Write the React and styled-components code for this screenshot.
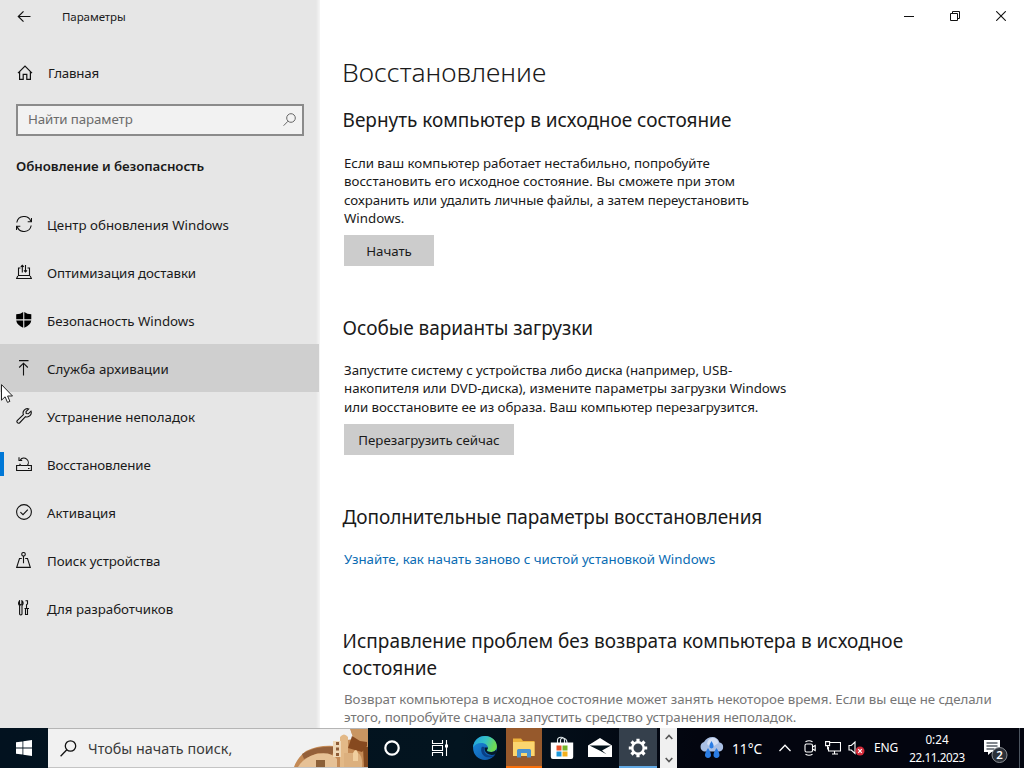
import React from 'react'
import styled, { createGlobalStyle } from 'styled-components'

const GlobalStyle = createGlobalStyle`
  * { box-sizing: border-box; }
  body {
    margin: 0;
    overflow: hidden;
    background: #fff;
    font-family: "Noto Sans", "Open Sans", sans-serif;
    color: #1a1a1a;
  }
  svg { display: block; flex: none; }
`;

const Screen = styled.div`
  position: relative;
  width: 1024px;
  height: 768px;
  display: flex;
  flex-direction: column;
  overflow: hidden;
`;

const Window = styled.div`
  height: 728px;
  display: flex;
  overflow: hidden;
`;

/* ---------- sidebar ---------- */

const Sidebar = styled.aside`
  width: 320px;
  flex: none;
  background: linear-gradient(90deg, #e6e6e6 316px, #f6f6f6 320px);
`;

const TitleRow = styled.div`
  height: 32px;
  padding: 1px 0 0 17px;
  display: flex;
  align-items: center;
  gap: 31px;
  font-size: 11.5px;
  letter-spacing: -0.08px;
`;

const HomeLink = styled.div`
  height: 48px;
  margin-top: 16px;
  padding: 2px 0 0 17px;
  display: flex;
  align-items: center;
  gap: 15px;
  font-size: 13.3px;
  letter-spacing: -0.2px;
`;

const SearchField = styled.div`
  width: 288px;
  height: 32px;
  margin: 8px 0 0 16px;
  padding: 0 6px 2px 10px;
  display: flex;
  align-items: center;
  justify-content: space-between;
  border: 2px solid #8b8b8b;
  background: #f2f2f2;
  font-size: 13.3px;
  letter-spacing: -0.1px;
  color: #6b6b6b;

  svg { margin-top: 2px; }
`;

const GroupTitle = styled.div`
  height: 64px;
  padding-left: 16px;
  line-height: 60px;
  font-size: 13.3px;
  font-weight: 600;
  letter-spacing: -0.08px;
`;

const NavItem = styled.div`
  width: ${p => p.$hover ? '319px' : '316px'};
  height: 48px;
  display: flex;
  align-items: center;
  background: ${p => p.$hover ? '#cfcfcf' : 'transparent'};
  font-size: 13.3px;
  letter-spacing: ${p => p.$track || 0}px;
`;

const Marker = styled.span`
  width: 4px;
  height: 24px;
  margin-right: 12px;
  background: ${p => p.$active ? '#0078d7' : 'transparent'};
`;

const NavLabel = styled.span`
  padding: 2px 0 0 15px;
`;

/* ---------- main pane ---------- */

const Main = styled.main`
  flex: 1;
  background: #fff;
`;

const Controls = styled.div`
  height: 32px;
  display: flex;
  justify-content: flex-end;
`;

const Control = styled.div`
  width: 46px;
  height: 32px;
  display: flex;
  align-items: center;
  justify-content: center;
`;

const Body = styled.div`
  padding: 22px 0 0 22px;
`;

const Heading = styled.h1`
  margin: 0;
  font-size: 26.5px;
  font-weight: 300;
  line-height: 36px;
`;

const Section = styled.section`
  height: ${p => p.$height}px;
  padding-top: 17px;
`;

const Subheading = styled.h2`
  margin: 0 0 ${p => p.$gap}px;
  padding-left: 0.6px;
  font-size: 19px;
  font-weight: 400;
  line-height: 27px;
`;

const Line = styled.span`
  display: block;
  white-space: nowrap;
  letter-spacing: ${p => p.$track || 0}px;
`;

const Text = styled.div`
  padding-left: 2px;
  font-size: 13.3px;
  line-height: 18.4px;
  color: ${p => p.$muted ? '#767676' : '#1a1a1a'};
`;

const Link = styled.a`
  display: block;
  padding-left: 2px;
  font-size: 13.3px;
  line-height: 18.4px;
  color: #0a6cb3;
`;

const Button = styled.button`
  display: block;
  width: ${p => p.$width}px;
  height: 31px;
  margin: 7.5px 0 0 2px;
  padding: 1px 0 0;
  border: 0;
  background: #ccc;
  font: 13.3px "Noto Sans", sans-serif;
  letter-spacing: -0.04px;
  color: #1a1a1a;
`;

/* ---------- taskbar ---------- */

const Taskbar = styled.footer`
  height: 40px;
  display: flex;
  background: linear-gradient(90deg, #02121f, #03141f 45%, #03050f 68%);
  color: #fff;
`;

const Slot = styled.div`
  width: ${p => p.$width}px;
  height: 40px;
  flex: none;
  display: flex;
  align-items: center;
  justify-content: center;
  background: ${p => p.$bg || 'transparent'};
  border-bottom: ${p => p.$line ? `2px solid ${p.$line}` : '0'};
  border-top: ${p => p.$line ? '2px solid transparent' : '0'};
`;

const TaskSearch = styled.div`
  width: 320px;
  height: 40px;
  flex: none;
  display: flex;
  align-items: center;
  border-top: 1px solid #b5b5b5;
  border-bottom: 1px solid #c4c4c4;
  background: #f1f1f1;
  color: #3a3a3a;
  padding-left: 12px;
  font-size: 14.3px;
  letter-spacing: 0.05px;
`;

const TaskLabel = styled.span`
  flex: 1;
  padding: 1px 0 0 11px;
`;

const ScrollArrows = styled.div`
  width: 17px;
  height: 40px;
  margin-left: 3px;
  flex: none;
  display: flex;
  flex-direction: column;
  align-items: center;
  justify-content: space-between;
  padding: 6px 0 5px;
  background: #f0f0f0;
`;

const Degrees = styled.span`
  width: 40px;
  padding-left: 7px;
  font-size: 13.7px;
  line-height: 41px;
`;

const Language = styled.span`
  width: 39px;
  padding-left: 7px;
  font-size: 12px;
  line-height: 40px;
  letter-spacing: -0.2px;
`;

const Clock = styled.div`
  width: 62px;
  padding-top: 2px;
  font-size: 11.7px;
  line-height: 18px;
  text-align: center;
  white-space: nowrap;
`;

const ActionCenter = styled.div`
  width: 51px;
  padding: 10px 0 0 15px;
`;

const Pointer = styled.div`
  position: absolute;
  left: 1px;
  top: 384px;
`;

const Stroke = ({ w = 16, h = 16, sw = 1.1, children, color = '#111' }) => (
  <svg width={w} height={h} viewBox={`0 0 ${w} ${h}`} fill="none" stroke={color} strokeWidth={sw}>
    {children}
  </svg>
)

const icons = {
  update: (
    <Stroke>
      <path d="M.8 6.5A7.300 7.300 0 0 1 14.900 5.500M15.200 9.500A7.300 7.300 0 0 1 1.100 10.500" />
      <path d="M15.500 2v3.800h-3.800M.5 14v-3.800h3.800" />
    </Stroke>
  ),
  delivery: (
    <Stroke>
      <path d="M4.500 4H2.500v7.500h11V4h-2M1.800 12L.6 14.500h14.800L14.200 12" />
      <path d="M6.300 8.500V1.300M4.800 2.900l1.500-1.600 1.500 1.600M9.500 1v7M8 6.400L9.500 8 11 6.400" />
    </Stroke>
  ),
  shield: (
    <svg width="16" height="16" viewBox="0 0 16 16" fill="#000">
      <path d="M7.200 0v7.300H.2V2.200Q4.600 2.200 7.200 0zM8.300 0Q11 2.200 15.300 2.200V7.300h-7zM.2 8.400h7v7.300Q.8 12.800.2 8.400zM8.300 8.400h7q-.6 4.400-7 7.300z" />
    </svg>
  ),
  backup: (
    <Stroke>
      <path d="M3 .6h9.500M7.500 15.500V3.200M3.200 7.500l4.300-4.300 4.300 4.300" />
    </Stroke>
  ),
  wrench: (
    <Stroke>
      <path d="M15 3.200L12.300 5.800 10.200 5.600 10 3.600 12.700.9A4.300 4.300 0 0 0 7.400 6.600L1.200 12.600A1.700 1.700 0 0 0 3.500 15L9.500 8.700A4.300 4.300 0 0 0 15 3.200z" />
    </Stroke>
  ),
  recovery: (
    <Stroke>
      <path d="M4.500 9.500H.6v5h14.800v-5H11.500M12 12.500h1.500" />
      <path d="M4.300 3.800A4.300 4.300 0 1 1 11.300 9.500H5L3.500 7.800M3 1.300v3.200h3.200" />
    </Stroke>
  ),
  activation: (
    <Stroke>
      <circle cx="8" cy="8" r="7.400" />
      <path d="M4.400 8.200l2.600 2.500 4.800-5" />
    </Stroke>
  ),
  find: (
    <Stroke>
      <circle cx="7.500" cy="2.300" r="1.800" />
      <path d="M7.500 4.100v7.200M5.800 6.500H3.500L.7 15.400h13.600L11.500 6.500H9.200" />
    </Stroke>
  ),
  developers: (
    <Stroke>
      <path d="M3.500.8v3l1.200 1.100L5.900 3.800v-3Q7.500 2 7 4L6 5.600v8.600q-1.200 1.500-2.400 0V5.600Q1.500 3.500 3.500.8z" />
      <path d="M9.500.8h2v3l-1 1v4M8.500 8.500h4.500M9.500 8.500v6h2v-6" />
    </Stroke>
  ),
}

const nav = [
  { id: 'update', label: 'Центр обновления Windows' },
  { id: 'delivery', label: 'Оптимизация доставки', track: -0.12 },
  { id: 'shield', label: 'Безопасность Windows', track: -0.03 },
  { id: 'backup', label: 'Служба архивации', hover: true },
  { id: 'wrench', label: 'Устранение неполадок' },
  { id: 'recovery', label: 'Восстановление', track: -0.14, active: true },
  { id: 'activation', label: 'Активация' },
  { id: 'find', label: 'Поиск устройства', track: -0.03 },
  { id: 'developers', label: 'Для разработчиков', track: -0.03 },
]

const SearchArt = () => (
  <svg width="74" height="38" viewBox="0 0 74 38">
    <path d="M0 38Q3 29 12 22Q24 16 40 17L46 12 60 10 56 0h18v38z" fill="#c48a55" />
    <path d="M57 0h17v18l-8-2q-9-7-9-16z" fill="#c99662" />
    <path d="M58 7l-4 12 14 4 5-6v-4l-7-1z" fill="#86491f" />
    <path d="M8 25Q22 16 42 18l-4 8-14-2-14 6z" fill="#94603a" />
    <path d="M4 38Q9 29 22 25Q37 22 43 30v8z" fill="#e6c196" />
    <path d="M22 38v-7h9v7z" fill="#8c6038" />
    <path d="M46 38V8q4-5 8 0v30z" fill="#e3b987" />
    <path d="M39 28V12h8v16z" fill="#efd8b7" />
    <path d="M42 13h3v3h-3zM42 18.500h3v3h-3zM42 24h3v3h-3z" fill="#8f5c36" />
    <path d="M50 24h14q5 3 4 14H50z" fill="#dcb07e" />
    <path d="M59 24q3-6 5 0v8h-5z" fill="#f0cf9f" />
    <path d="M69 18h5v20h-4z" fill="#82491f" />
  </svg>
)

const Edge = () => (
  <svg width="26" height="26" viewBox="0 0 24 24">
    <defs>
      <linearGradient id="edgeTop" x1="0" x2="1" y1="0" y2=".3">
        <stop offset="0" stopColor="#1f9fe0" />
        <stop offset=".55" stopColor="#35c2c6" />
        <stop offset="1" stopColor="#6fdb52" />
      </linearGradient>
      <linearGradient id="edgeLow" x1="0" x2="1" y1="0" y2="1">
        <stop offset="0" stopColor="#1b8fe0" />
        <stop offset="1" stopColor="#0d4fa0" />
      </linearGradient>
    </defs>
    <circle cx="12" cy="12" r="11" fill="url(#edgeLow)" />
    <path d="M1 11.500C1.500 5 6.300 1 12 1c6.500 0 11 4.700 11 9.600 0 3-2.300 5.100-5.400 5.100-2.600 0-3.900-.9-3.900-1.600 0-.5 1-.9 1-2.500 0-2.200-2.500-4.300-6-4.300-3.800 0-6.500 1.800-7.700 4.200z" fill="url(#edgeTop)" />
    <path d="M9 11c-1.800 4 1 9.300 5.700 9.600 3 .2 5-.8 6.700-2.200-1.500.6-3 .9-4.400.8-4-.2-6.600-3.500-5.500-7.200q.2-1.300-2.500-1z" fill="#0a3f86" />
    <path d="M14.700 11.600c0 1.600-1 2-1 2.500 0 .7 1.300 1.600 3.900 1.600 1.900 0 3.500-.8 4.500-2.100l.9 1.900-1.200 2.300q-4.300 1.500-7.300-.4-3.300-2-2.800-5.800z" fill="#051a2d" />
  </svg>
)

const Explorer = () => (
  <svg width="24" height="22" viewBox="0 0 24 22">
    <path d="M1 1.500h8l2 2.500h11.500v15H1z" fill="#eeb43c" />
    <path d="M1 5h21.500v14H1z" fill="#fbd66f" />
    <path d="M5 20.500v-7Q5 12 6.500 12h11Q19 12 19 13.500v7h-4V16H9v4.500z" fill="#4a92cf" />
  </svg>
)

const Store = () => (
  <svg width="24" height="24" viewBox="0 0 24 24">
    <path d="M7.500 7V4.500Q7.500 1.300 11 1.300t3.500 3.200V7M10.500 7V4Q11 1.500 14 2.200q3 .8 3 4.800" fill="none" stroke="#dfe7ea" strokeWidth="1.100" />
    <path d="M.8 6.500h22.400V21q0 2-2 2H2.800q-2 0-2-2z" fill="#fff" />
    <path d="M6.500 9.500h5v5h-5z" fill="#e8512a" />
    <path d="M12.500 9.500h5v5h-5z" fill="#76b52a" />
    <path d="M6.500 15.500h5v5h-5z" fill="#1d98da" />
    <path d="M12.500 15.500h5v5h-5z" fill="#f2b01e" />
  </svg>
)

const Mail = () => (
  <svg width="24" height="20" viewBox="0 0 24 20">
    <path d="M0 7.500L12 0l12 7.500V19H0z" fill="#fff" />
    <path d="M1.500 7.500H23l-9 5 4.500 3.800L12 12.800z" fill="#03121b" />
  </svg>
)

const Gear = () => (
  <svg width="20" height="20" viewBox="0 0 20 20" fill="none" stroke="#fff">
    <circle cx="10" cy="10" r="5.700" strokeWidth="2.400" />
    <path d="M10 .8v3.200M10 16v3.200M.8 10H4M16 10h3.200M3.500 3.500l2.300 2.300M14.200 14.200l2.300 2.300M3.500 16.500l2.300-2.300M14.200 5.800l2.300-2.300" strokeWidth="3.200" />
  </svg>
)

const Weather = () => (
  <svg width="26" height="24" viewBox="0 0 26 24">
    <path d="M5 15.500a5 5 0 0 1 0-9.500Q8 1 13.500 1q5 0 7 5.500a4.600 4.600 0 0 1 0 9z" fill="#a9bfe4" />
    <path d="M8 8q1-6 6-6.200 4.500.2 5.500 5.200L12 12z" fill="#d2def3" />
    <path d="M12.500 5q4.500 7 0 7.500-4.500-.5 0-7.500zM9 12q6 9 0 10-6-1 0-10zM17.500 12q6 9 0 10-6-1 0-10z" fill="#2b7de4" />
  </svg>
)

const App = () => {
  return (
    <Screen>
      <GlobalStyle />
      <Window>
        <Sidebar>
          <TitleRow>
            <Stroke w={14} h={14} sw={1.2}><path d="M13.500 6.500H1.500M6.500 1.300L1.300 6.500l5.200 5.200" /></Stroke>
            Параметры
          </TitleRow>
          <HomeLink>
            <Stroke w={16} h={16} sw={1.2}><path d="M1 8.200L8 1.200l7 7M2.600 6.800v7.600h3.600V9.300h3.600v5.100h3.600V6.800" /></Stroke>
            Главная
          </HomeLink>
          <SearchField>
            Найти параметр
            <Stroke w={13} h={14} sw={1} color="#666"><circle cx="8" cy="5" r="4.300" /><path d="M5 8.200L.6 12.700" /></Stroke>
          </SearchField>
          <GroupTitle>Обновление и безопасность</GroupTitle>
          {nav.map(item => (
            <NavItem key={item.id} $hover={item.hover} $track={item.track}>
              <Marker $active={item.active} />
              {icons[item.id]}
              <NavLabel>{item.label}</NavLabel>
            </NavItem>
          ))}
        </Sidebar>

        <Main>
          <Controls>
            <Control><Stroke w={10} h={10} sw={1}><path d="M0 5.500h10" /></Stroke></Control>
            <Control><Stroke w={10} h={10} sw={1}><path d="M.5 2.500h7v7h-7zM2.500 2.500v-2h7v7h-2" /></Stroke></Control>
            <Control><Stroke w={10} h={10} sw={1.1}><path d="M.2.200l9.600 9.600M9.800.200L.2 9.800" /></Stroke></Control>
          </Controls>
          <Body>
            <Heading>Восстановление</Heading>
            <Section $height={208}>
              <Subheading $gap={20}><Line $track={-0.02}>Вернуть компьютер в исходное состояние</Line></Subheading>
              <Text>
                <Line $track={-0.02}>Если ваш компьютер работает нестабильно, попробуйте</Line>
                <Line>восстановить его исходное состояние. Вы сможете при этом</Line>
                <Line $track={-0.07}>сохранить или удалить личные файлы, а затем переустановить</Line>
                <Line>Windows.</Line>
              </Text>
              <Button $width={90}>Начать</Button>
            </Section>
            <Section $height={189}>
              <Subheading $gap={19}><Line $track={-0.03}>Особые варианты загрузки</Line></Subheading>
              <Text>
                <Line $track={-0.02}>Запустите систему с устройства либо диска (например, USB-</Line>
                <Line $track={-0.03}>накопителя или DVD-диска), измените параметры загрузки Windows</Line>
                <Line $track={-0.05}>или восстановите ее из образа. Ваш компьютер перезагрузится.</Line>
              </Text>
              <Button $width={170}>Перезагрузить сейчас</Button>
            </Section>
            <Section $height={124}>
              <Subheading $gap={19}><Line $track={-0.09}>Дополнительные параметры восстановления</Line></Subheading>
              <Link>Узнайте, как начать заново с чистой установкой Windows</Link>
            </Section>
            <Section $height={120}>
              <Subheading $gap={7.5}>
                <Line>Исправление проблем без возврата компьютера в исходное</Line>
                <Line>состояние</Line>
              </Subheading>
              <Text $muted>
                <Line $track={-0.02}>Возврат компьютера в исходное состояние может занять некоторое время. Если вы еще не сделали</Line>
                <Line $track={-0.04}>этого, попробуйте сначала запустить средство устранения неполадок.</Line>
              </Text>
            </Section>
          </Body>
        </Main>
      </Window>

      <Taskbar>
        <Slot $width={48}>
          <svg width="16" height="16" viewBox="0 0 16 16" fill="#fff">
            <path d="M0 2.300l6.500-.9v6.200H0zM7.300 1.300L16 0v7.600H7.300zM0 8.400h6.500v6.200L0 13.700zM7.300 8.400H16V16l-8.700-1.300z" />
          </svg>
        </Slot>
        <TaskSearch>
          <Stroke w={17} h={17} sw={1.3}><circle cx="10.500" cy="6" r="5.200" /><path d="M6.800 9.800L.6 16.200" /></Stroke>
          <TaskLabel>Чтобы начать поиск,</TaskLabel>
          <SearchArt />
        </TaskSearch>
        <Slot $width={48}>
          <Stroke w={18} h={18} sw={2.2} color="#fff"><circle cx="9" cy="9" r="6.700" /></Stroke>
        </Slot>
        <Slot $width={48}>
          <Stroke w={18} h={16} sw={1.1} color="#fff">
            <path d="M1.500 0v3.500h10V0M1.500 16v-3.500h10V16M1.500 5.500h10v5h-10zM15.500 0v16" />
            <path d="M15.500 4.500v3" strokeWidth="3" />
          </Stroke>
        </Slot>
        <Slot $width={42}><Edge /></Slot>
        <Slot $width={36} $bg="#96592c" $line="#f8700c"><Explorer /></Slot>
        <Slot $width={39}><Store /></Slot>
        <Slot $width={38}><Mail /></Slot>
        <Slot $width={38} $bg="#35404c" $line="#62a9e4"><Gear /></Slot>
        <ScrollArrows>
          <Stroke w={8} h={6} sw={1.6} color="#555"><path d="M.7 5L4 1.500 7.300 5" /></Stroke>
          <Stroke w={8} h={6} sw={1.6} color="#555"><path d="M.7 1L4 4.500 7.300 1" /></Stroke>
        </ScrollArrows>
        <Slot $width={22} />
        <Slot $width={26}><Weather /></Slot>
        <Degrees>11°C</Degrees>
        <Slot $width={39}>
          <Stroke w={12} h={8} sw={1.3} color="#fff"><path d="M.5 7L6 1.300 11.500 7" /></Stroke>
        </Slot>
        <Slot $width={12}>
          <Stroke w={12} h={16} sw={1.1} color="#fff">
            <rect x="1" y="4" width="7.500" height="8" rx="1.500" />
            <path d="M8.500 7l2.700-1.500v5L8.500 9M1.500 1.800Q5-.2 8.500 1.800M1.500 14.200q3.500 2 7 0" />
          </Stroke>
        </Slot>
        <Slot $width={34}>
          <Stroke w={16} h={14} sw={1.1} color="#fff">
            <path d="M4.500 1.500h11v8.500h-12V6M7 13h6M9.500 10v3M.6.600h4v4h-4zM2.600 4.600v4" />
          </Stroke>
        </Slot>
        <Slot $width={12}>
          <svg width="17" height="16" viewBox="0 0 17 16">
            <path d="M1 5.500h2.300L7 2v11.500L3.300 10H1z" fill="none" stroke="#fff" strokeWidth="1.100" />
            <circle cx="12" cy="11" r="4.500" fill="#d42b3a" />
            <path d="M10.200 9.200l3.600 3.600M13.800 9.200l-3.600 3.600" stroke="#fff" strokeWidth="1.200" />
          </svg>
        </Slot>
        <Slot $width={5} />
        <Language>ENG</Language>
        <Clock>
          <Line>0:24</Line>
          <Line $track={-0.4}>22.11.2023</Line>
        </Clock>
        <ActionCenter>
          <svg width="26" height="26" viewBox="0 0 26 26">
            <path d="M1 2h16v12H8.500L5 17v-3H1z" fill="#fff" />
            <path d="M3.500 5h11M3.500 8h11M3.500 11h8" stroke="#06101c" strokeWidth="1.100" />
            <circle cx="16.500" cy="17" r="7.500" fill="#2b3038" stroke="#8b8f94" />
            <text x="16.500" y="21.400" textAnchor="middle" fontSize="11.500" fontWeight="600" fill="#fff">2</text>
          </svg>
        </ActionCenter>
        <Slot $width={1} $bg="#4c5560" />
      </Taskbar>

      <Pointer>
        <svg width="12" height="20" viewBox="0 0 12 20">
          <path d="M.5.600v15.600l3.600-3.400 2.400 5.600 2.400-1-2.300-5.400h4.900z" fill="#fff" stroke="#222" strokeWidth="1" />
        </svg>
      </Pointer>
    </Screen>
  )
}

export default App
